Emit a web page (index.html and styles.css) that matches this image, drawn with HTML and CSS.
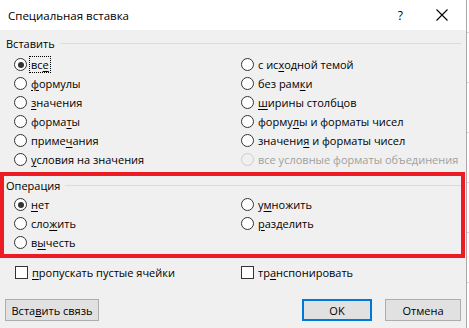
FILE: index.html
```html
<!DOCTYPE html>
<html lang="ru">
<head>
    <meta charset="UTF-8">
    <title>Специальная вставка</title>
    <link rel="stylesheet" href="styles.css">
</head>
<body>
    <div class="dialog">
        <div class="titlebar">
            <span class="title">Специальная вставка</span>
            <span class="help">?</span>
            <svg class="close" width="12" height="12" viewBox="0 0 12 12">
                <path d="M0.5 0.5 L11.5 11.5 M11.5 0.5 L0.5 11.5" stroke="#000" stroke-width="1.1" fill="none"/>
            </svg>
        </div>

        <div class="content">
            <div class="group-title"><span>Вставить</span></div>
            <div class="options">
                <div class="col">
                    <label class="opt"><span class="radio checked"></span><span class="focus">вс<u>е</u></span></label>
                    <label class="opt"><span class="radio"></span><span><u>ф</u>ормулы</span></label>
                    <label class="opt"><span class="radio"></span><span><u>з</u>начения</span></label>
                    <label class="opt"><span class="radio"></span><span>форма<u>т</u>ы</span></label>
                    <label class="opt"><span class="radio"></span><span>приме<u>ч</u>ания</span></label>
                    <label class="opt"><span class="radio"></span><span><u>у</u>словия на значения</span></label>
                </div>
                <div class="col">
                    <label class="opt"><span class="radio"></span><span>с ис<u>х</u>одной темой</span></label>
                    <label class="opt"><span class="radio"></span><span>без рам<u>к</u>и</span></label>
                    <label class="opt"><span class="radio"></span><span><u>ш</u>ирины столбцов</span></label>
                    <label class="opt"><span class="radio"></span><span>форму<u>л</u>ы и форматы чисел</span></label>
                    <label class="opt"><span class="radio"></span><span>значени<u>я</u> и форматы чисел</span></label>
                    <label class="opt disabled"><span class="radio"></span><span>все условные форматы объединения</span></label>
                </div>
            </div>

            <div class="op-group">
                <div class="group-title"><span>Операция</span></div>
                <div class="options">
                    <div class="col">
                        <label class="opt"><span class="radio checked"></span><span><u>н</u>ет</span></label>
                        <label class="opt"><span class="radio"></span><span>сло<u>ж</u>ить</span></label>
                        <label class="opt"><span class="radio"></span><span>в<u>ы</u>честь</span></label>
                    </div>
                    <div class="col">
                        <label class="opt"><span class="radio"></span><span>у<u>м</u>ножить</span></label>
                        <label class="opt"><span class="radio"></span><span><u>р</u>азделить</span></label>
                    </div>
                </div>
                <div class="highlight"></div>
            </div>

            <div class="options checks">
                <div class="col">
                    <label class="opt"><span class="check"></span><span><u>п</u>ропускать пустые ячейки</span></label>
                </div>
                <div class="col">
                    <label class="opt"><span class="check"></span><span>тр<u>а</u>нспонировать</span></label>
                </div>
            </div>

            <div class="buttons">
                <button class="btn">Вста<u>в</u>ить связь</button>
                <span class="spacer"></span>
                <button class="btn btn-default">OK</button>
                <button class="btn btn-cancel">Отмена</button>
            </div>
        </div>
    </div>
</body>
</html>
```

FILE: styles.css
```css
body {
    margin: 0;
    padding: 0;
    width: 469px;
    height: 328px;
    overflow: hidden;
    font-family: "Open Sans", "Noto Sans", sans-serif;
    font-size: 11px;
    color: #000;
    background-color: #ffffff;
    background-image: repeating-linear-gradient(to bottom, transparent 0, transparent 32px, #d4d4d4 32px, #d4d4d4 33px, transparent 33px, transparent 50px);
}
.dialog {
    width: 466px;
    height: 328px;
    background-color: #f0f0f0;
    border-right: 1px solid #a9a9a9;
}
.titlebar {
    height: 30px;
    background-color: #ffffff;
    display: flex;
    align-items: center;
    padding-left: 8px;
}
.title {
    font-size: 11.5px;
    flex: 1;
}
.help {
    font-size: 12px;
    margin-right: 33px;
}
.close {
    margin-right: 18px;
}
.content {
    padding: 6px 5px 0 5px;
}
.group-title {
    height: 16px;
    line-height: 16px;
    display: flex;
    align-items: center;
    padding-left: 1px;
}
.group-title::after {
    content: "";
    flex: 1;
    height: 1px;
    background-color: #dcdcdc;
    margin-left: 5px;
    margin-top: -2px;
}
.options {
    display: flex;
    margin-top: 3px;
}
.col {
    display: flex;
    flex-direction: column;
    flex: none;
}
.col:first-child {
    width: 227px;
    padding-left: 9px;
}
.opt {
    height: 19px;
    display: flex;
    align-items: center;
    gap: 4px;
    white-space: nowrap;
}
.opt u {
    text-decoration-thickness: 1px;
    text-underline-offset: 2px;
}
.radio {
    width: 11px;
    height: 11px;
    border: 1px solid #333;
    border-radius: 50%;
    background-color: #fff;
    position: relative;
    flex: none;
}
.radio.checked::after {
    content: "";
    position: absolute;
    left: 2.5px;
    top: 2.5px;
    width: 6px;
    height: 6px;
    border-radius: 50%;
    background-color: #333;
}
.focus {
    outline: 1px dotted #000;
    outline-offset: 0;
    padding: 0 1px;
    margin-left: -1px;
    line-height: 15px;
}
.disabled {
    color: #a0a0a0;
}
.disabled .radio {
    border-color: #cccccc;
    background-color: #f0f0f0;
}
.op-group {
    position: relative;
    margin-top: 9px;
}
.op-group .options {
    margin-top: 1px;
}
.highlight {
    position: absolute;
    left: -5px;
    top: -6px;
    width: 457px;
    height: 78px;
    border: 4px solid #ed1c24;
}
.checks {
    margin-top: 11px;
}
.check {
    width: 11px;
    height: 11px;
    border: 1px solid #333;
    background-color: #fff;
    flex: none;
}
.checks .col:first-child .check {
    margin-left: 1px;
}
.buttons {
    display: flex;
    margin-top: 17px;
    height: 22px;
}
.btn {
    font-family: inherit;
    font-size: 11px;
    color: #000;
    background-color: #e1e1e1;
    border: 1px solid #adadad;
    padding: 0;
    height: 22px;
    width: 94px;
}
.spacer {
    flex: 1;
}
.btn-default {
    width: 70px;
    border: 2px solid #0078d7;
    margin-right: 13px;
}
.btn-cancel {
    width: 76px;
}
```
